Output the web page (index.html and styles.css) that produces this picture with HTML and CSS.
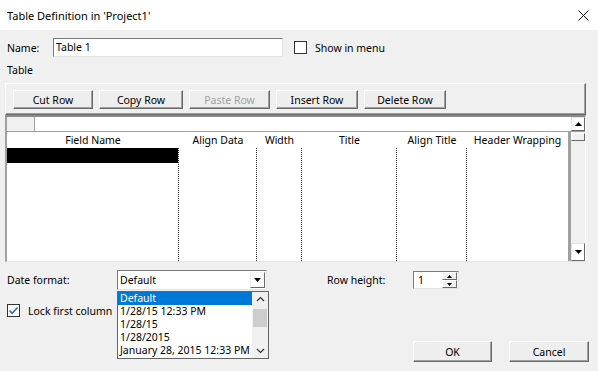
FILE: index.html
```html
<!DOCTYPE html>
<html lang="en">
<head>
    <meta charset="UTF-8">
    <title>Table Definition</title>
    <link rel="stylesheet" href="styles.css">
</head>
<body>
    <div class="dialog">
        <div class="titlebar">
            <span class="title">Table Definition in 'Project1'</span>
            <svg class="close" width="11" height="11" viewBox="0 0 11 11"><path d="M0.5 0.5L10.5 10.5M10.5 0.5L0.5 10.5" stroke="#111" stroke-width="1"/></svg>
        </div>

        <div class="content">
            <div class="name-row">
                <span class="name-label">Name:</span>
                <div class="textbox name-box">Table 1</div>
                <span class="checkbox"></span>
                <span class="check-label">Show in menu</span>
            </div>

            <div class="section-label">Table</div>

            <div class="toolbar">
                <button class="btn btn-cut">Cut Row</button>
                <button class="btn btn-copy">Copy Row</button>
                <button class="btn btn-paste" disabled>Paste Row</button>
                <button class="btn btn-insert">Insert Row</button>
                <button class="btn btn-delete">Delete Row</button>
            </div>

            <!-- Grid with field definitions -->
            <div class="grid">
                <div class="grid-top">
                    <div class="corner"></div>
                    <div class="top-fill"></div>
                    <div class="sb-btn sb-up">
                        <svg width="7" height="4" viewBox="0 0 7 4"><path d="M0 4L3.5 0L7 4Z" fill="#000"/></svg>
                    </div>
                </div>
                <div class="grid-rest">
                    <div class="grid-main">
                        <div class="grid-head">
                            <div class="col c1">Field Name</div>
                            <div class="col c2">Align Data</div>
                            <div class="col c3">Width</div>
                            <div class="col c4">Title</div>
                            <div class="col c5">Align Title</div>
                            <div class="col c6">Header Wrapping</div>
                        </div>
                        <div class="grid-body">
                            <div class="col c1 dotted"><div class="selected"></div></div>
                            <div class="col c2 dotted"></div>
                            <div class="col c3 dotted"></div>
                            <div class="col c4 dotted"></div>
                            <div class="col c5 dotted"></div>
                            <div class="col c6"></div>
                        </div>
                    </div>
                    <div class="strip"></div>
                    <div class="track">
                        <div class="thumb"></div>
                        <div class="sb-btn sb-down">
                            <svg width="7" height="4" viewBox="0 0 7 4"><path d="M0 0L3.5 4L7 0Z" fill="#000"/></svg>
                        </div>
                    </div>
                </div>
            </div>

            <div class="options">
                <div class="opt-row">
                    <span class="opt-label">Date format:</span>
                    <div class="combo">
                        <span class="combo-text">Default</span>
                        <div class="combo-btn">
                            <svg width="7" height="4" viewBox="0 0 7 4"><path d="M0 0L3.5 4L7 0Z" fill="#000"/></svg>
                        </div>
                        <div class="droplist">
                            <div class="items">
                                <div class="item active">Default</div>
                                <div class="item">1/28/15 12:33 PM</div>
                                <div class="item">1/28/15</div>
                                <div class="item">1/28/2015</div>
                                <div class="item">January 28, 2015 12:33 PM</div>
                            </div>
                            <div class="list-scroll">
                                <svg width="9" height="6" viewBox="0 0 9 6"><path d="M1 5L4.5 1.5L8 5" stroke="#333" stroke-width="1.2" fill="none"/></svg>
                                <div class="list-thumb"></div>
                                <svg class="chev-down" width="9" height="6" viewBox="0 0 9 6"><path d="M1 1L4.5 4.5L8 1" stroke="#333" stroke-width="1.2" fill="none"/></svg>
                            </div>
                        </div>
                    </div>
                    <span class="row-label">Row height:</span>
                    <div class="spin">
                        <span class="spin-text">1</span>
                        <div class="spin-btns">
                            <div class="spin-btn"><svg width="5" height="3" viewBox="0 0 5 3"><path d="M0 3L2.5 0L5 3Z" fill="#000"/></svg></div>
                            <div class="spin-btn"><svg width="5" height="3" viewBox="0 0 5 3"><path d="M0 0L2.5 3L5 0Z" fill="#000"/></svg></div>
                        </div>
                    </div>
                </div>

                <div class="opt-row lock-row">
                    <span class="checkbox checked">
                        <svg width="11" height="11" viewBox="0 0 11 11"><path d="M1.5 5.5L4.2 8.3L9.5 2.5" stroke="#2f6fb0" stroke-width="1.6" fill="none"/></svg>
                    </span>
                    <span class="check-label">Lock first column</span>
                </div>

                <div class="actions">
                    <button class="btn btn-ok">OK</button>
                    <button class="btn btn-cancel">Cancel</button>
                </div>
            </div>
        </div>
    </div>
</body>
</html>
```

FILE: styles.css
```css
body {
    margin: 0;
    font-family: "Noto Sans", "Open Sans", sans-serif;
    font-size: 10.5px;
    color: #000;
    background-color: #f0f0f0;
}
.dialog {
    width: 598px;
    height: 371px;
    overflow: hidden;
    background-color: #f0f0f0;
}
.titlebar {
    height: 30px;
    background-color: #fff;
    display: flex;
    align-items: center;
    justify-content: space-between;
    padding: 0 9px 0 7px;
    box-sizing: border-box;
}
.title {
    font-size: 11px;
}
.content {
    padding: 8px 0 0 5px;
}
.name-row {
    display: flex;
    align-items: center;
    height: 19px;
    padding-left: 2px;
}
.name-label {
    width: 46px;
}
.textbox {
    background-color: #fff;
    border: 1px solid;
    border-color: #7a7a7a #e3e3e3 #e3e3e3 #7a7a7a;
    box-sizing: border-box;
    height: 19px;
    line-height: 17px;
    padding: 0 2px;
}
.name-box {
    width: 230px;
}
.checkbox {
    width: 13px;
    height: 13px;
    box-sizing: border-box;
    border: 1px solid #333;
    background-color: #fff;
    margin-left: 11px;
    display: flex;
    align-items: center;
    justify-content: center;
}
.check-label {
    margin-left: 8px;
}
.section-label {
    padding-left: 2px;
    margin-top: 6px;
    line-height: 15px;
}
.toolbar {
    width: 581px;
    height: 32px;
    margin-top: 5px;
    box-sizing: border-box;
    border: 1px solid;
    border-color: #fff #696969 #696969 #fff;
    box-shadow: inset -1px -1px #a0a0a0;
    display: flex;
    gap: 6px;
    padding: 6px 0 0 7px;
}
.btn {
    height: 19px;
    padding: 0;
    font-family: inherit;
    font-size: 10.5px;
    color: #000;
    background-color: #eeeeee;
    border: 1px solid;
    border-color: #fff #696969 #696969 #fff;
    box-shadow: inset -1px -1px #a0a0a0;
    border-radius: 0;
}
.btn:disabled {
    color: #a0a0a0;
}
.btn-cut { width: 80px; }
.btn-copy { width: 84px; }
.btn-paste { width: 81px; }
.btn-insert { width: 82px; }
.btn-delete { width: 82px; }

.grid {
    width: 581px;
    height: 147px;
    box-sizing: border-box;
    border-style: solid;
    border-width: 2px 1px 1px 2px;
    border-color: #8a8a8a #fff #e3e3e3 #a0a0a0;
    background-color: #fff;
    display: flex;
    flex-direction: column;
}
.grid-top {
    display: flex;
    height: 15px;
    border-bottom: 1px solid #a0a0a0;
    box-sizing: border-box;
}
.corner {
    width: 27px;
    background-color: #f0f0f0;
    border-right: 1px solid #a0a0a0;
}
.top-fill {
    flex: 1;
}
.sb-btn {
    width: 14px;
    box-sizing: border-box;
    background-color: #fff;
    border: 1px solid;
    border-color: #e3e3e3 #696969 #696969 #e3e3e3;
    display: flex;
    align-items: center;
    justify-content: center;
}
.grid-rest {
    flex: 1;
    display: flex;
}
.grid-main {
    width: 561px;
    display: flex;
    flex-direction: column;
}
.grid-head {
    display: flex;
    height: 16px;
    line-height: 16px;
}
.grid-body {
    flex: 1;
    display: flex;
}
.col {
    box-sizing: border-box;
    text-align: center;
    white-space: nowrap;
}
.dotted {
    border-right: 1px dotted #222;
}
.c1 { width: 172px; }
.c2 { width: 78px; }
.c3 { width: 45px; }
.c4 { width: 95px; }
.c5 { width: 70px; }
.c6 { width: 101px; }
.selected {
    height: 15px;
    background-color: #000;
}
.strip {
    width: 3px;
    background-color: #a0a0a0;
}
.track {
    flex: 1;
    background-color: #f0f0f0;
    display: flex;
    flex-direction: column;
    justify-content: space-between;
}
.thumb {
    height: 8px;
    margin-top: 1px;
    box-sizing: border-box;
    border: 1px solid;
    border-color: #fff #696969 #696969 #fff;
}
.sb-down {
    height: 18px;
}

.options {
    margin-top: 8px;
}
.opt-row {
    display: flex;
    align-items: center;
    height: 20px;
    padding-left: 2px;
}
.opt-label {
    width: 110px;
}
.combo {
    position: relative;
    width: 150px;
    height: 20px;
    box-sizing: border-box;
    background-color: #fff;
    border: 1px solid;
    border-color: #7a7a7a #e3e3e3 #e3e3e3 #7a7a7a;
    display: flex;
    align-items: center;
}
.combo-text {
    flex: 1;
    padding-left: 2px;
}
.combo-btn {
    width: 15px;
    height: 16px;
    margin-right: 1px;
    box-sizing: border-box;
    border: 1px solid;
    border-color: #f0f0f0 #696969 #696969 #f0f0f0;
    display: flex;
    align-items: center;
    justify-content: center;
}
.droplist {
    position: absolute;
    top: 20px;
    left: -1px;
    width: 152px;
    height: 68px;
    box-sizing: border-box;
    background-color: #fff;
    border: 1px solid #646464;
    display: flex;
    z-index: 2;
}
.items {
    flex: 1;
    overflow: hidden;
    font-size: 10.5px;
}
.item {
    height: 13px;
    line-height: 13px;
    padding-left: 2px;
    white-space: nowrap;
}
.item.active {
    background-color: #0078d7;
    color: #fff;
}
.list-scroll {
    width: 16px;
    background-color: #f0f0f0;
    display: flex;
    flex-direction: column;
    align-items: center;
    padding-top: 4px;
    box-sizing: border-box;
}
.list-thumb {
    width: 14px;
    height: 18px;
    margin-top: 7px;
    background-color: #cdcdcd;
}
.chev-down {
    margin-top: auto;
    margin-bottom: 4px;
}
.row-label {
    margin-left: 60px;
    width: 86px;
}
.spin {
    width: 46px;
    height: 18px;
    box-sizing: border-box;
    background-color: #fff;
    border: 1px solid;
    border-color: #7a7a7a #e3e3e3 #e3e3e3 #7a7a7a;
    display: flex;
    align-items: center;
}
.spin-text {
    flex: 1;
    padding-left: 4px;
}
.spin-btns {
    width: 15px;
    height: 16px;
    margin-right: 1px;
    display: flex;
    flex-direction: column;
}
.spin-btn {
    flex: 1;
    box-sizing: border-box;
    border: 1px solid;
    border-color: #fff #696969 #696969 #fff;
    background-color: #f0f0f0;
    display: flex;
    align-items: center;
    justify-content: center;
}
.lock-row {
    margin-top: 14px;
    height: 13px;
}
.lock-row .checkbox {
    margin-left: 0;
}
.actions {
    display: flex;
    justify-content: flex-end;
    gap: 17px;
    margin-top: 24px;
    padding-right: 9px;
}
.btn-ok {
    width: 79px;
    height: 21px;
}
.btn-cancel {
    width: 80px;
    height: 21px;
}
```
